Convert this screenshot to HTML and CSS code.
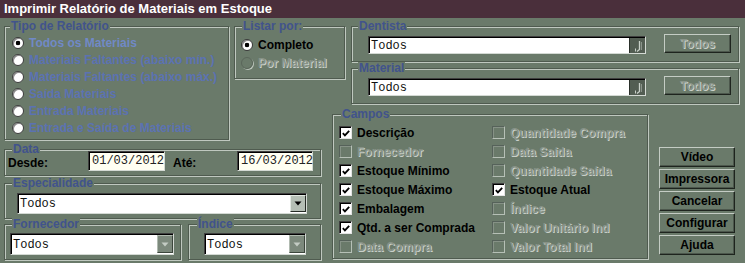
FILE: index.html
```html
<!DOCTYPE html>
<html lang="pt">
<head>
<meta charset="utf-8">
<title>Imprimir Relatório de Materiais em Estoque</title>
<link rel="stylesheet" href="styles.css">
</head>
<body>
<div class="titlebar">Imprimir Relatório de Materiais em Estoque</div>
<div class="form">
  <div class="group g-tipo">
    <div class="legend">Tipo de Relatório</div>
    <div class="tipo-list">
      <div class="radio-row first"><span class="radio on"></span><span>Todos os Materiais</span></div>
      <div class="radio-row"><span class="radio"></span><span>Materiais Faltantes (abaixo mín.)</span></div>
      <div class="radio-row"><span class="radio"></span><span>Materiais Faltantes (abaixo máx.)</span></div>
      <div class="radio-row"><span class="radio"></span><span>Saída Materiais</span></div>
      <div class="radio-row"><span class="radio"></span><span>Entrada Materiais</span></div>
      <div class="radio-row"><span class="radio"></span><span>Entrada e Saída de Materiais</span></div>
    </div>
  </div>

  <div class="group g-listar">
    <div class="legend">Listar por:</div>
    <div class="listar-list">
      <div class="radio-row dark"><span class="radio on"></span><span>Completo</span></div>
      <div class="radio-row disabled"><span class="radio off"></span><span>Por Material</span></div>
    </div>
  </div>

  <div class="group g-dent">
    <div class="legend">Dentista</div>
    <div class="combo-row">
      <div class="combo wide"><span class="combo-text">Todos</span><span class="lookup"><svg width="14" height="16" viewBox="0 0 14 16"><path d="M8.5 3V11.5L6 13.5" fill="none" stroke="#c9d1c9" stroke-width="1.3"/><path d="M4.5 10.5V13.5" fill="none" stroke="#c9d1c9" stroke-width="1"/><path d="M10.5 4V12" fill="none" stroke="#8a948a" stroke-width="1"/></svg></span></div>
      <div class="btn disabled-btn todos">Todos</div>
    </div>
  </div>

  <div class="group g-mat">
    <div class="legend">Material</div>
    <div class="combo-row">
      <div class="combo wide"><span class="combo-text">Todos</span><span class="lookup"><svg width="14" height="16" viewBox="0 0 14 16"><path d="M8.5 3V11.5L6 13.5" fill="none" stroke="#c9d1c9" stroke-width="1.3"/><path d="M4.5 10.5V13.5" fill="none" stroke="#c9d1c9" stroke-width="1"/><path d="M10.5 4V12" fill="none" stroke="#8a948a" stroke-width="1"/></svg></span></div>
      <div class="btn disabled-btn todos">Todos</div>
    </div>
  </div>

  <div class="group g-campos">
    <div class="legend">Campos</div>
    <div class="checks">
      <div class="check-row"><span class="cb on"><svg width="11" height="11" viewBox="0 0 11 11"><path d="M2 5.2L4.3 7.6L9 2.6" fill="none" stroke="#000" stroke-width="2"/></svg></span><span>Descrição</span></div>
      <div class="check-row disabled"><span class="cb off"></span><span>Fornecedor</span></div>
      <div class="check-row"><span class="cb on"><svg width="11" height="11" viewBox="0 0 11 11"><path d="M2 5.2L4.3 7.6L9 2.6" fill="none" stroke="#000" stroke-width="2"/></svg></span><span>Estoque Mínimo</span></div>
      <div class="check-row"><span class="cb on"><svg width="11" height="11" viewBox="0 0 11 11"><path d="M2 5.2L4.3 7.6L9 2.6" fill="none" stroke="#000" stroke-width="2"/></svg></span><span>Estoque Máximo</span></div>
      <div class="check-row"><span class="cb on"><svg width="11" height="11" viewBox="0 0 11 11"><path d="M2 5.2L4.3 7.6L9 2.6" fill="none" stroke="#000" stroke-width="2"/></svg></span><span>Embalagem</span></div>
      <div class="check-row"><span class="cb on"><svg width="11" height="11" viewBox="0 0 11 11"><path d="M2 5.2L4.3 7.6L9 2.6" fill="none" stroke="#000" stroke-width="2"/></svg></span><span>Qtd. a ser Comprada</span></div>
      <div class="check-row disabled"><span class="cb off"></span><span>Data Compra</span></div>
      <div class="check-row disabled"><span class="cb off"></span><span>Quantidade Compra</span></div>
      <div class="check-row disabled"><span class="cb off"></span><span>Data Saída</span></div>
      <div class="check-row disabled"><span class="cb off"></span><span>Quantidade Saída</span></div>
      <div class="check-row"><span class="cb on"><svg width="11" height="11" viewBox="0 0 11 11"><path d="M2 5.2L4.3 7.6L9 2.6" fill="none" stroke="#000" stroke-width="2"/></svg></span><span>Estoque Atual</span></div>
      <div class="check-row disabled"><span class="cb off"></span><span>Índice</span></div>
      <div class="check-row disabled"><span class="cb off"></span><span>Valor Unitário Ind</span></div>
      <div class="check-row disabled"><span class="cb off"></span><span>Valor Total Ind</span></div>
    </div>
  </div>

  <div class="g-btns">
    <div class="btn">Vídeo</div>
    <div class="btn">Impressora</div>
    <div class="btn">Cancelar</div>
    <div class="btn">Configurar</div>
    <div class="btn">Ajuda</div>
  </div>

  <div class="group g-data">
    <div class="legend overlap">Data</div>
    <div class="data-row">
      <span class="lbl desde">Desde:</span>
      <span class="date">01/03/2012</span>
      <span class="lbl ate">Até:</span>
      <span class="date">16/03/2012</span>
    </div>
  </div>

  <div class="group g-esp">
    <div class="legend">Especialidade</div>
    <div class="combo esp"><span class="combo-text">Todos</span><span class="drop"><svg width="8" height="5" viewBox="0 0 8 5"><path d="M0.5 0.5H7.5L4 4.5Z" fill="#000"/></svg></span></div>
  </div>

  <div class="g-row">
    <div class="group g-forn">
      <div class="legend">Fornecedor</div>
      <div class="combo forn"><span class="combo-text">Todos</span><span class="drop dis"><svg width="8" height="5" viewBox="0 0 8 5"><path d="M0.5 0.5H7.5L4 4.5Z" fill="#c4ccc4"/></svg></span></div>
    </div>
    <div class="group g-ind">
      <div class="legend">Índice</div>
      <div class="combo ind"><span class="combo-text">Todos</span><span class="drop dis"><svg width="8" height="5" viewBox="0 0 8 5"><path d="M0.5 0.5H7.5L4 4.5Z" fill="#c4ccc4"/></svg></span></div>
    </div>
  </div>
</div>
</body>
</html>
```

FILE: styles.css
```css
* { box-sizing: border-box; }

body {
  margin: 0;
  width: 745px;
  height: 263px;
  overflow: hidden;
  background: #6a7a6a;
  font: bold 12px "Liberation Sans", Arial, sans-serif;
  color: #000;
}

.titlebar {
  height: 18px;
  line-height: 18px;
  padding-left: 4px;
  background: #4a2f3b;
  color: #fff;
  font-size: 13px;
}

.form {
  display: grid;
  grid-template-columns: 225px 5px 87px 11px 13px 6px 297px 11px 76px 4px;
  grid-template-rows: 42px 46px 33px 2px 34px 41px auto;
  align-items: start;
  padding: 8px 0 0 4px;
}

.group {
  border: 1px solid #4f5b4f;
  box-shadow: inset 1px 1px 0 #bfc8bf, 1px 1px 0 #bfc8bf;
}

.legend {
  width: max-content;
  height: 13px;
  line-height: 13px;
  margin: -7px 0 0 5px;
  padding: 0 1px;
  background: #6a7a6a;
  color: #41538c;
}

.legend.overlap { margin-bottom: -6px; }

/* Tipo de Relatório */
.g-tipo { grid-column: 1 / 2; grid-row: 1 / 4; height: 114px; }
.g-tipo .legend { margin-left: 5px; }
.tipo-list { margin-top: 1px; padding-left: 7px; }

.radio-row {
  display: flex;
  align-items: center;
  gap: 5px;
  height: 17px;
  color: #5b72b2;
}
.radio-row.first { color: #7089c6; }
.radio-row.dark { color: #000; }
.radio-row.disabled { color: #879287; text-shadow: 1px 1px 0 #c9d0c9; }

.radio {
  flex: none;
  width: 12px;
  height: 12px;
  border-radius: 50%;
  background: #fff;
  border: 1px solid #3c3c3c;
  box-shadow: inset 1px 1px 0 #8a8a8a;
}
.radio.on { background: radial-gradient(circle, #000 0 2px, #fff 2.6px); }
.radio.off {
  background: transparent;
  border-color: #5a665a;
  box-shadow: 1px 1px 0 #b9c3b9;
}

/* Listar por */
.g-listar { grid-column: 3 / 6; grid-row: 1 / 3; height: 53px; }
.g-listar .legend { margin-left: 7px; }
.listar-list { margin-top: 3px; padding-left: 6px; }
.listar-list .radio-row { height: 18px; }

/* Dentista / Material */
.g-dent { grid-column: 7 / 11; grid-row: 1 / 2; height: 36px; }
.g-mat { grid-column: 7 / 11; grid-row: 2 / 3; height: 36px; }
.g-dent .legend, .g-mat .legend { margin-left: 6px; }

.combo-row {
  display: flex;
  align-items: flex-start;
  padding-left: 16px;
}
.combo-row .combo { margin-top: 3px; }
.combo-row .todos { margin-top: 1px; margin-left: 18px; }

.combo {
  display: flex;
  align-items: stretch;
  background: #fff;
  border: 1px solid;
  border-color: #3e3e3e #d4dad4 #d4dad4 #3e3e3e;
  box-shadow: inset 1px 1px 0 #000;
}
.combo-text {
  flex: 1;
  padding: 1px 0 0 2px;
  font: normal 12px "Liberation Mono", "Courier New", monospace;
  color: #111;
  display: flex;
  align-items: center;
}
.combo.wide { width: 278px; height: 18px; }

.lookup {
  flex: none;
  width: 16px;
  margin-top: 1px;
  background: #525d52;
  border-left: 1px solid #2a302a;
  display: flex;
  align-items: center;
  justify-content: center;
}

.drop {
  flex: none;
  width: 16px;
  margin: 1px 0 0 0;
  background: #b4beb4;
  border: 1px solid;
  border-color: #e2e8e2 #262c26 #262c26 #e2e8e2;
  display: flex;
  align-items: center;
  justify-content: center;
}
.drop.dis { background: #7c897c; border-color: #b0bab0 #3c463c #3c463c #b0bab0; }

/* Buttons */
.btn {
  display: flex;
  align-items: center;
  justify-content: center;
  height: 20px;
  background: #6a7a6a;
  border: 1px solid;
  border-color: #c4ccc4 #1e241e #1e241e #c4ccc4;
  box-shadow: inset -1px -1px 0 #4c574c;
  color: #000;
  font-size: 12px;
}
.btn.todos { width: 67px; height: 19px; }
.disabled-btn { color: #8a958a; text-shadow: 1px 1px 0 #ccd3cc; }

.g-btns {
  grid-column: 9 / 10;
  grid-row: 4 / 8;
  display: flex;
  flex-direction: column;
  gap: 2px;
}

/* Campos */
.g-campos { grid-column: 5 / 8; grid-row: 3 / 8; height: 145px; }
.g-campos .legend { margin-left: 8px; }
.checks {
  display: grid;
  grid-template-columns: 153px auto;
  grid-template-rows: repeat(7, 19px);
  grid-auto-flow: column;
  margin-top: 2px;
  padding-left: 6px;
}
.check-row {
  display: flex;
  align-items: center;
  gap: 5px;
}
.check-row.disabled { color: #879287; text-shadow: 1px 1px 0 #c9d0c9; }

.cb {
  flex: none;
  width: 13px;
  height: 13px;
  border: 1px solid;
  border-color: #3e3e3e #e4e4e4 #e4e4e4 #3e3e3e;
  box-shadow: inset 1px 1px 0 #000;
  background: #fff;
  display: flex;
  align-items: center;
  justify-content: center;
}
.cb.on svg { margin: 1px 0 0 1px; }
.cb.off {
  background: transparent;
  border-color: #56625a #b6c0b6 #b6c0b6 #56625a;
  box-shadow: inset 1px 1px 0 #869286;
}

/* Data */
.g-data { grid-column: 1 / 4; grid-row: 5 / 6; height: 27px; }
.g-data .legend { margin-left: 7px; }
.data-row {
  display: flex;
  align-items: center;
  height: 20px;
  margin-top: 1px;
  padding-left: 3px;
}
.lbl { color: #000; }
.lbl.desde { width: 80px; padding-top: 3px; }
.lbl.ate { width: 64px; margin-left: 8px; padding-top: 3px; }
.date {
  width: 77px;
  height: 20px;
  padding: 2px 0 0 3px;
  background: #fffff2;
  border: 1px solid;
  border-color: #3e3e3e #d4dad4 #d4dad4 #3e3e3e;
  box-shadow: inset 1px 1px 0 #000;
  font: normal 12px "Liberation Mono", "Courier New", monospace;
  color: #222;
  line-height: 15px;
}
.date + .lbl + .date { width: 76px; }

/* Especialidade */
.g-esp { grid-column: 1 / 4; grid-row: 6 / 7; height: 36px; }
.g-esp .legend { margin-left: 7px; }
.combo.esp { width: 290px; height: 21px; margin: 3px 0 0 12px; }
.combo.esp .drop { margin-bottom: 1px; }

/* Fornecedor / Índice */
.g-row {
  grid-column: 1 / 4;
  grid-row: 7 / 8;
  display: flex;
  gap: 7px;
}
.g-forn { width: 177px; height: 36px; }
.g-ind { flex: 1; height: 36px; }
.g-forn .legend { margin-left: 7px; }
.g-ind .legend { margin-left: 8px; }
.combo.forn { width: 164px; height: 22px; margin: 2px 0 0 5px; }
.combo.ind { width: 102px; height: 22px; margin: 2px 0 0 15px; }
.combo.forn .drop, .combo.ind .drop { margin-bottom: 1px; }
```
